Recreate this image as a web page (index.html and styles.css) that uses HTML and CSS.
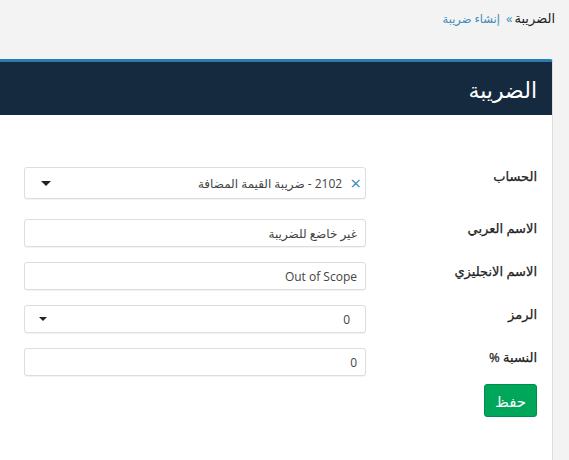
FILE: index.html
```html
<!DOCTYPE html>
<html lang="ar" dir="rtl"><head><meta http-equiv="Content-Type" content="text/html; charset=UTF-8">
<link rel="stylesheet" href="styles.css">
</head>
<body>

<div class="breadcrumb">
    <span class="crumb-current">الضريبة</span><span class="crumb-sep">»</span><a href="#" class="crumb-link">إنشاء ضريبة</a>
</div>

<div class="panel">
    <div class="panel-head">
        <h1 class="panel-title">الضريبة</h1>
    </div>

    <div class="panel-body">
        <div class="form-row first">
            <label for="Account">الحساب</label>
            <div class="select-box tall" id="Account">
                <span class="clear">×</span>
                <span class="select-text">2102 - ضريبة القيمة المضافة</span>
                <span class="caret"></span>
            </div>
        </div>

        <div class="form-row">
            <label for="NameAr">الاسم العربي</label>
            <input type="text" id="NameAr" value="غير خاضع للضريبة">
        </div>

        <div class="form-row">
            <label for="NameEn">الاسم الانجليزي</label>
            <input type="text" id="NameEn" value="Out of Scope">
        </div>

        <div class="form-row">
            <label for="Code">الرمز</label>
            <div class="select-box code" id="Code">
                <span class="select-text">0</span>
                <span class="caret small"></span>
            </div>
        </div>

        <div class="form-row">
            <label for="Rate">النسبة %</label>
            <input type="text" id="Rate" value="0">
        </div>

        <div class="form-actions">
            <button>حفظ</button>
        </div>
    </div>
</div>

</body></html>
```

FILE: styles.css
```css
body {
background-color: #f3f3f3;
color: #333;
font-family: "Open Sans", "DejaVu Sans", sans-serif;
font-size: 13px;
margin: 0;
padding: 0;
direction: rtl;
}

.breadcrumb {
padding: 9px 14px 0 0;
height: 50px;
box-sizing: border-box;
font-size: 13px;
}

.crumb-current {
color: #222;
}

.crumb-sep {
color: #3c8dbc;
margin: 0 2px 0 6px;
}

.crumb-link {
color: #3c8dbc;
text-decoration: none;
font-size: 11.5px;
}

.panel {
margin-top: 9px;
margin-right: 16px;
background-color: #fff;
border-top: 3px solid #2a7cb1;
border-right: 1px solid #ddd;
border-top-right-radius: 3px;
height: 400px;
}

.panel-head {
background-color: #152a3f;
height: 53px;
display: flex;
align-items: center;
padding-right: 15px;
}

.panel-title {
margin: 0;
color: #fff;
font-size: 22px;
font-weight: normal;
}

.panel-body {
padding: 52px 15px 0 0;
}

.form-row {
display: flex;
align-items: flex-start;
margin-bottom: 15px;
}

.form-row.first {
margin-bottom: 20px;
}

.form-row label {
width: 171px;
flex: none;
margin-top: 0;
font-size: 13px;
color: #222;
-webkit-text-stroke: 0.25px #222;
}

input[type="text"],
.select-box {
width: 342px;
height: 28px;
box-sizing: border-box;
border: 1px solid #ddd;
border-radius: 3px;
background-color: #fff;
padding: 0 8px;
font-family: inherit;
font-size: 12px;
color: #444;
box-shadow: 0 1px 1px rgba(0, 0, 0, 0.05);
}

.select-box {
display: flex;
align-items: center;
}

.select-box.tall {
height: 32px;
padding-right: 4px;
}

.select-box.code {
padding-right: 15px;
}

.clear {
color: #3c8dbc;
font-size: 19px;
margin-left: 8px;
}

.select-text {
flex: 1;
}

.caret {
width: 0;
height: 0;
border-left: 5px solid transparent;
border-right: 5px solid transparent;
border-top: 5px solid #222;
margin-left: 8px;
}

.caret.small {
border-left-width: 4px;
border-right-width: 4px;
border-top-width: 4px;
margin-left: 6px;
}

.form-actions {
margin-top: -7px;
}

button {
background-color: #00a65a;
color: #fff;
border: 1px solid #008d4c;
border-radius: 3px;
width: 53px;
height: 33px;
font-family: inherit;
font-size: 15px;
cursor: pointer;
}
```
